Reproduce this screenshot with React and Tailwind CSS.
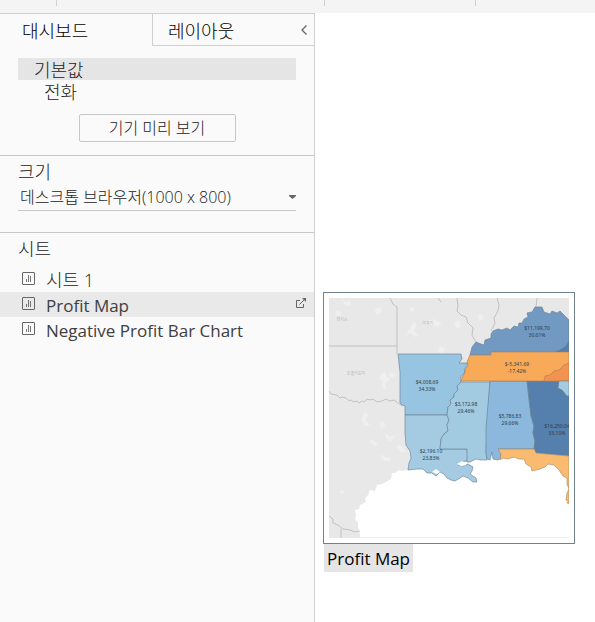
import React from "react";

const sheets = [
  { name: "시트 1", text: "text-[18px] font-light text-[#222]" },
  { name: "Profit Map", text: "text-[17px] font-normal text-[#404040]", active: true },
  { name: "Negative Profit Bar Chart", text: "text-[17px] font-normal text-[#404040]" },
];

function SheetIcon() {
  return (
    <svg width="13" height="13" viewBox="0 0 13 13" fill="none" stroke="#666" className="shrink-0" aria-hidden="true">
      <rect x="0.5" y="0.5" width="12" height="12" rx="0.5" />
      <path d="M4.5 7v3M6.5 3v7M8.5 4v6" strokeWidth="0.9" />
    </svg>
  );
}

function OpenIcon() {
  return (
    <svg width="10" height="10" viewBox="0 0 10 10" fill="none" stroke="#666" className="block" aria-hidden="true">
      <path d="M4 2.5H0.5V9.5H7.5V6M3.5 6.5L8 2" />
      <path d="M6 0h4v4z" fill="#666" stroke="none" />
    </svg>
  );
}

const mapLabels = [
  { x: 98, y: 86, lines: ["$4,008.69", "34.33%"] },
  { x: 208, y: 32, lines: ["$11,199.70", "30.61%"] },
  { x: 188, y: 68, lines: ["$-5,341.69", "-17.42%"] },
  { x: 137, y: 108, lines: ["$3,172.98", "29.46%"] },
  { x: 181, y: 120, lines: ["$5,786.83", "29.66%"] },
  { x: 102, y: 155, lines: ["$2,196.10", "23.83%"] },
  { x: 228, y: 130, lines: ["$16,250.04", "33.10%"] },
];

function ProfitMap() {
  return (
    <svg viewBox="0 0 240 240" className="block w-full" role="img" aria-label="Profit Map">
      <rect width="240" height="240" fill="#e8e8e8" />
      <g fill="#efefef">
        <path d="M12 0l5 4 4-2 1 6-6-1zM45 12l6-3 2 5-5 3zM80 31l5-7 3 2-3 7 5 5-4 1-4-4-5 2zM98 23l6-2 9 4-4 3-8-1zM52 77l4-4 2 6 3 2-5 5 1 6-4-3 1-6-4-2zM35 114l4 2-2 7 4 4-5 1-4-6zM50 127l3-4 4 5-4 3zM42 141l7 5-3 2-6-4zM51 156l7 4 4-1-2 5-8-3zM56 135l6 4 4-2-4 7-5-4zM70 146l7 7-4 2-6-6zM8 12l4 2-2 4-4-2zM125 25l5-3 2 6-4 3zM111 48l5 3-2 5-5-3zM151 15l4 4-3 4-3-3zM61 74l6 2-3 4-4-2zM12 192l4 1-2 3-3-1zM80 11l4-2 2 4-4 1z" />
      </g>
      <path
        d="M79 172l-6 1-3-1-4 3-3 0-1 6-5 3-4 2-5 1-2 6-5-1-2 5-3 3 1 4-6 3-1 4-4 1 1 5-1 4 3 4 0 5 2 6v8h209V150H140z"
        fill="#fff"
      />
      <g fill="none" stroke="#b8b8b8" strokeWidth="0.8">
        <path d="M0 48h68M68 56V9l-4-3-3-6M109 0l3 4M0 93l2 3 6 1 3 3 2-1 4 1 3 3 2-1 3 2 3-1 2 2 3-2 2 1 3-3 3 1 3-1 4 3 5-1 4-2 4 2 4-1 4 3 4 3M128 0l1 8-1 5 4 4 5 2 2 6 5 5-1 7 2 4 3 4M168 0l2 7-1 6-4 7 1 5-4 8M208 0l-1 9M0 218l4 3 0 4 5 2 5 4 7 1 5 2 5-1M12 231v9" />
      </g>
      <g stroke="#6b8193" strokeOpacity="0.8" strokeWidth="0.8" strokeLinejoin="round">
        <path
          d="M69 56H132L133 61 130 65H139L136 71 135 76 132 78 132 84 128 88 129 92 125 96V99L121 102 122 106 119 109 118 117H76V108L73 107 71 105V74z"
          fill="#97c4e0"
        />
        <path
          d="M76 117H118L120 122 118 127 119 133 115 136 112 141 111 151H138L139 156 138 163 132 164 129 167 134 168 139 166 144 169 143 173 141 176 147 180 148 184 144 184 139 180 134 178 131 180 126 183 122 182 118 180 115 176 111 174 107 178 103 175 98 175 94 171 88 171 79 172 80 165 82 160 81 153 77 147 76 135z"
          fill="#a4cbe2"
        />
        <path
          d="M132 84H161L158 130 157 155 158 162 152 162 147 161 141 164H138V151H111L112 141 115 136 119 133 118 127 120 122 118 117 119 109 122 106 121 102 125 99V96L129 92 128 88z"
          fill="#a2cbe2"
        />
        <path d="M161 83h37l4 35 3 10-1 7 2 8-1 8h-36l3 4 0 5-3 2-5-1-1-7-2 8-3-1-1-6v-25z" fill="#8bb8dc" />
        <path d="M198 83H240V158L207 155 205 151 206 143 204 135 205 128 202 118z" fill="#557fac" />
        <path
          d="M169 151H205L207 155 240 158V204L237 202 238 195 240 191 238 186V180L234 178 230 172 225 167 219 166 216 169 211 171 207 172 203 173 202 169 197 166 195 161 190 161 185 159 179 161 174 160 171 162 172 156z"
          fill="#fabb71"
          stroke="#a48a69"
        />
        <path
          d="M141 57L143 49 147 44 152 46 155 47 156 42 162 40V36L164 33 169 31 173 32 178 30 181 32 185 28 189 29 190 25H193L195 21 199 19 198 15 203 14 206 9 213 9 215 14 221 16 223 13 228 15 231 13 235 17 240 22V56z"
          fill="#7199c1"
        />
        <path d="M223 55l8-3 6-4 3-5v12z" fill="#557fac" />
        <path
          d="M141 57H162V54H240V83H132L134 78 136 75V71L139 68 138 64z"
          fill="#f9aa59"
          stroke="#9d8061"
        />
        <path d="M215 83l1-5 5-1 4-4 5-1 5-5 5-2v18z" fill="#f29450" stroke="#b47d50" />
        <path d="M230 83h10v15l-2 0-5-6-4-2z" fill="#a4cbe2" />
      </g>
      <path d="M128 166l5-3 4 2 0 2-5 1z" fill="#fff" />
      <path d="M103 174l4-3 4 3-3 2z" fill="#fff" />
      <path d="M237 205l3-2v3z" fill="#f29450" />
      <g fontSize="5" textAnchor="middle" fill="#2f3c4a" className="font-['Noto_Sans',sans-serif] font-normal">
        {mapLabels.map((label) => (
          <text key={label.lines[0]} x={label.x} y={label.y}>
            {label.lines[0]}
            <tspan x={label.x} dy="7">{label.lines[1]}</tspan>
          </text>
        ))}
      </g>
      <g fontSize="4" textAnchor="middle" fill="#a8a8a8">
        <text x="13" y="23">캔자스</text>
        <text x="99" y="27">미주리</text>
        <text x="27" y="77">오클라호마</text>
      </g>
      <path d="M31 239.500H240" stroke="#eee" />
    </svg>
  );
}

export default function App() {
  return (
    <div className="flex min-h-screen flex-col bg-white font-['Open_Sans','Noto_Sans_CJK_KR',sans-serif] font-light text-[#222]">
      <header className="flex h-[13px] shrink-0 items-start bg-[#f4f4f4]">
        <div className="h-1.5 w-[57px] border-r border-[#d0d0d0]" />
        <div className="h-1.5 w-[268px] border-r border-[#d0d0d0]" />
        <div className="h-1.5 w-[151px] border-r border-[#d0d0d0]" />
      </header>
      <div className="flex flex-1">
        <aside className="w-[315px] shrink-0 border-t border-r border-[#d0d0d0] bg-[#fafafa]">
          <div className="flex h-8 text-[18px] text-black">
            <button className="w-[152px] pt-0.5 pl-[22px] text-left">대시보드</button>
            <div className="flex flex-1 border-b border-l border-[#d0d0d0]">
              <button className="flex-1 pt-1 pl-[15px] text-left">레이아웃</button>
              <button aria-label="창 축소" className="flex w-5 items-center justify-center">
                <svg width="7" height="10" viewBox="0 0 7 10" fill="none" stroke="#666" strokeWidth="1.3" aria-hidden="true">
                  <path d="M5.500 0.500L1 5l4.500 4.500" />
                </svg>
              </button>
            </div>
          </div>

          <section className="flex flex-col border-b border-[#c8c8c8] px-[18px] pt-3 pb-[13px]">
            <button className="h-[22px] bg-[#e5e5e5] pl-4 text-left text-[18px] leading-6">기본값</button>
            <button className="h-6 pl-[26px] text-left text-[18px] leading-6">전화</button>
            <button className="mt-[10px] h-7 w-[157px] self-center rounded-xs border border-[#c8c8c8] text-[16px] leading-[26px]">
              기기 미리 보기
            </button>
          </section>

          <section className="border-b border-[#c8c8c8] px-[18px] pt-1 pb-[21px]">
            <label htmlFor="size" className="block h-6 text-[18px] leading-6">크기</label>
            <div className="grid h-[27px] items-center border-b border-[#c8c8c8]">
              <select
                id="size"
                className="col-start-1 row-start-1 h-[26px] w-full appearance-none bg-transparent pl-0.5 text-[16px] leading-[26px]"
              >
                <option>데스크톱 브라우저(1000 x 800)</option>
              </select>
              <svg
                width="7"
                height="4"
                viewBox="0 0 7 4"
                fill="#666"
                className="pointer-events-none col-start-1 row-start-1 justify-self-end"
                aria-hidden="true"
              >
                <path d="M0 0h7v1L3.500 4 0 1z" />
              </svg>
            </div>
          </section>

          <section>
            <h2 className="mt-1 mb-[6px] h-6 pl-[18px] text-[18px] leading-6">시트</h2>
            <ul>
              {sheets.map((sheet) => (
                <li key={sheet.name} className={sheet.active ? "flex h-[25px] bg-[#e9e9e9]" : "flex h-[25px]"}>
                  <button className="flex flex-1 items-start gap-[11px] pl-[22px] text-left leading-[27px]">
                    <span className="pt-[5px]">
                      <SheetIcon />
                    </span>
                    <span className={sheet.text}>{sheet.name}</span>
                  </button>
                  {sheet.active && (
                    <button aria-label="시트로 이동" className="flex items-start pt-1.5 pr-2">
                      <OpenIcon />
                    </button>
                  )}
                </li>
              ))}
            </ul>
          </section>
        </aside>

        <main className="flex-1 pt-[279px] pl-2">
          <figure className="w-[252px]">
            <div className="border border-[#71818f] p-[5px]">
              <ProfitMap />
            </div>
            <figcaption className="ml-px h-7 w-fit bg-[#e5e5e5] px-[3px] text-[17px] leading-[30px] font-normal text-black">
              Profit Map
            </figcaption>
          </figure>
        </main>
      </div>
    </div>
  );
}
